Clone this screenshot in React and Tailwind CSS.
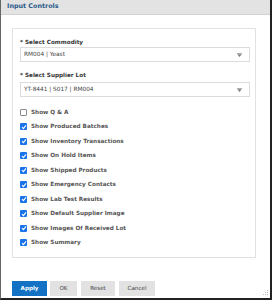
import React from "react";

const options = [
  { label: "Show Q & A", checked: false },
  { label: "Show Produced Batches", checked: true },
  { label: "Show Inventory Transactions", checked: true },
  { label: "Show On Hold Items", checked: true },
  { label: "Show Shipped Products", checked: true },
  { label: "Show Emergency Contacts", checked: true },
  { label: "Show Lab Test Results", checked: true },
  { label: "Show Default Supplier Image", checked: true },
  { label: "Show Images Of Received Lot", checked: true },
  { label: "Show Summary", checked: true },
];

function Arrow() {
  return (
    <svg width="5" height="4" viewBox="0 0 5 4" className="mr-[7px]">
      <rect x="0" y="0" width="5" height="0.8" fill="#9a9a9a" />
      <path d="M0.3 1.3 L4.7 1.3 L2.5 4 Z" fill="#7a7a7a" />
    </svg>
  );
}

function Select({ value }) {
  return (
    <div className="flex items-center justify-between h-[15px] w-[230px] border border-[#dcdcdc] bg-white pl-[3px]">
      <span className="text-[5.8px] text-[#444]">{value}</span>
      <Arrow />
    </div>
  );
}

function Check({ checked }) {
  if (!checked) {
    return <div className="w-[7px] h-[7px] border border-[#8c8c8c] rounded-[1px] bg-white" />;
  }
  return (
    <div className="w-[7px] h-[7px] rounded-[1px] bg-[#1a73e8] flex items-center justify-center">
      <svg width="6" height="6" viewBox="0 0 6 6">
        <path d="M1 3.2 L2.4 4.6 L5 1.4" stroke="white" strokeWidth="1.1" fill="none" />
      </svg>
    </div>
  );
}

export default function App() {
  return (
    <div
      className="w-[272px] h-[300px] flex flex-col bg-white border-l border-l-[#666] border-r-2 border-r-[#222] border-b-2 border-b-[#222]"
      style={{ fontFamily: '"DejaVu Sans", Verdana, sans-serif' }}
    >
      {/* Header */}
      <div className="h-[15px] shrink-0 flex items-center pl-[6px] bg-[#e3e3e3] border-b border-[#d2d2d2]">
        <span className="text-[6.4px] font-bold text-[#2a5a8a]">Input Controls</span>
      </div>

      {/* Body */}
      <div className="flex-1 flex flex-col pl-[11px] pt-[13px]">
        <div className="w-[244px] h-[230px] border border-[#e2e2e2] pl-[7px] pt-[9px]">
          <div className="h-[8px] flex items-center text-[5.7px] font-bold text-[#333]">* Select Commodity</div>
          <div className="mt-[1px]">
            <Select value="RM004 | Yeast" />
          </div>
          <div className="mt-[9px] h-[8px] flex items-center text-[5.7px] font-bold text-[#333]">* Select Supplier Lot</div>
          <div className="mt-[3px]">
            <Select value="YT-8441 | S017 | RM004" />
          </div>
          <div className="mt-[8px] flex flex-col">
            {options.map((o) => (
              <div key={o.label} className="h-[14.5px] flex items-center gap-[4px]">
                <Check checked={o.checked} />
                <span className="text-[5.7px] font-bold text-[#555]">{o.label}</span>
              </div>
            ))}
          </div>
        </div>

        {/* Buttons */}
        <div className="mt-[23px] flex items-center gap-[3px]">
          <button className="w-[35px] h-[15px] bg-[#1372c4] text-white text-[5.6px] font-bold">Apply</button>
          <button className="w-[27px] h-[15px] bg-[#e2e2e2] text-[#444] text-[5.6px]">OK</button>
          <button className="ml-[1px] w-[34px] h-[15px] bg-[#e2e2e2] text-[#444] text-[5.6px]">Reset</button>
          <button className="ml-[1px] w-[36px] h-[15px] bg-[#e2e2e2] text-[#444] text-[5.6px]">Cancel</button>
          <div className="flex-1 self-end flex justify-end pr-[1px]">
            <svg width="6" height="6" viewBox="0 0 6 6">
              <rect x="4" y="0" width="1" height="1" fill="#bbb" />
              <rect x="2" y="2" width="1" height="1" fill="#bbb" />
              <rect x="4" y="2" width="1" height="1" fill="#bbb" />
              <rect x="0" y="4" width="1" height="1" fill="#bbb" />
              <rect x="2" y="4" width="1" height="1" fill="#bbb" />
              <rect x="4" y="4" width="1" height="1" fill="#bbb" />
            </svg>
          </div>
        </div>
      </div>
    </div>
  );
}
